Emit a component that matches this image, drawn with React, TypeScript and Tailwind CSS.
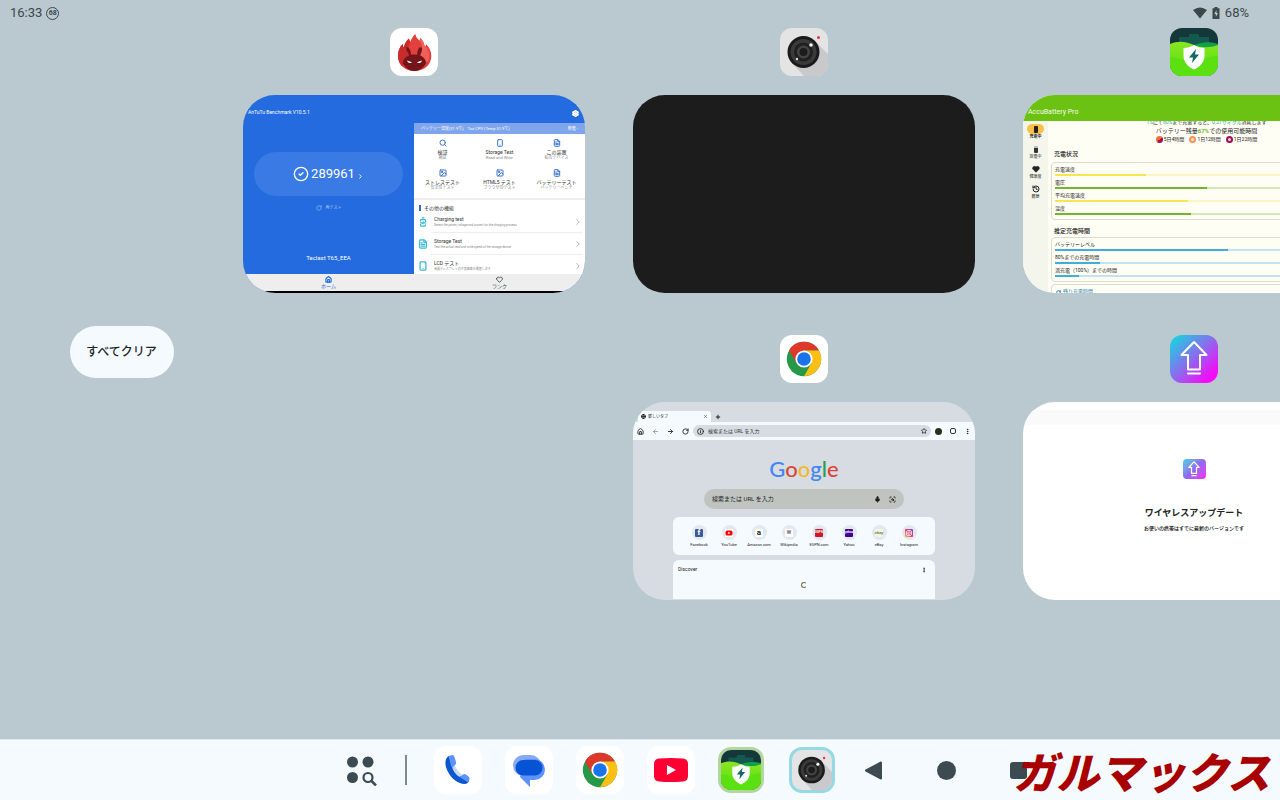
/**
 * Tablet recents screen
 * Overview of open tasks with the status bar and the taskbar
 */

import React from 'react'
import {
  ArrowLeft,
  ArrowRight,
  BatteryCharging,
  ChevronRight,
  CircleCheck,
  FileText,
  Globe,
  Heart,
  History,
  House,
  Image,
  Info,
  Mic,
  MoreVertical,
  Plus,
  RotateCw,
  ScanSearch,
  Search,
  Settings,
  Smartphone,
  Star,
  X,
} from 'lucide-react'

interface IconProps {
  className?: string
}

const AntutuIcon: React.FC<IconProps> = ({ className }) => (
  <svg className={className} viewBox="0 0 48 48" aria-hidden="true">
    <rect width="48" height="48" rx="12" fill="#fff" />
    <path
      d="M24.5 43C14.5 43 8 36.500 8 28c0-4.500 1.200-8.500 4.500-12 .2 1.600.6 2.600 1.300 3.500C14.500 16 16 13 19 10.500c.2 1.600.6 2.500 1.400 3.200C21.500 10.500 23 8 25.500 6c.2 2.800 1.500 4.600 4 6.600.6-.9.900-1.600 1-2.600 2.300 2.400 3.800 5.500 4.300 9 .8-.8 1.200-1.600 1.400-2.800C39.500 19.500 41.300 23.500 41.300 28 41.300 36.500 34.500 43 24.500 43z"
      fill="#e2403c"
    />
    <path
      d="M12.500 16C9.200 19.500 8 23.500 8 28c0 4 1.500 7.500 4 10l8-12c-2-5-1.500-9 .4-12.300-.8-.7-1.200-1.600-1.400-3.200-3 2.500-4.500 5.500-5.200 9-.7-.9-1.100-1.900-1.300-3.500z"
      fill="#c92a2a"
    />
    <path d="M29.500 12.600c3 5 3.500 9 1 15l7 7c3-6 2-12-2-16-.2 1-.4 1-.7.400-.5-3.500-2-6.600-4.300-9z" fill="#f0605a" />
    <path
      d="M12.800 35.500c0-4 3-6.800 6.400-8-.7-3-3.400-5-3-8 2.300-1.300 4.500 2.500 5 7.300 2-.4 4.200-.4 6 0 .3-4.500 1.300-8.300 4-7.500 2 1.500 0 5.200-1.200 8.300 3.500 1.300 6 4 6 7.900-2.500 4.500-7 7.500-11.700 7.500-4.800 0-9-3-11.500-7.500z"
      fill="#74141b"
    />
    <path d="M17 32.500l5 1.700c-.8 1.400-4 1.200-5-1.700zM32 32.500l-5 1.700c.8 1.400 4 1.200 5-1.700z" fill="#fff" />
  </svg>
)

const CameraIcon: React.FC<IconProps> = ({ className }) => (
  <svg className={className} viewBox="0 0 48 48" aria-hidden="true">
    <rect width="48" height="48" rx="12" fill="#e4e4e5" />
    <path d="M35 13l13 13v10a12 12 0 0 1-12 12H24L12 35z" fill="#c9c9cb" />
    <circle cx="23.500" cy="24" r="16" fill="#1b1b1b" />
    <circle cx="23.500" cy="24" r="13" fill="#3a3a3a" />
    <circle cx="23.500" cy="24" r="9.500" fill="#202020" />
    <circle cx="23.500" cy="24" r="6.500" fill="#444" />
    <circle cx="23.500" cy="24" r="4" fill="#1c1c1c" />
    <circle cx="31" cy="17" r="1.800" fill="#fff" />
    <circle cx="17" cy="31" r="1.200" fill="#ddd" />
    <circle cx="38.500" cy="9.500" r="1.500" fill="#ef2f4c" />
  </svg>
)

const AccuIcon: React.FC<IconProps> = ({ className }) => (
  <svg className={className} viewBox="0 0 48 48" aria-hidden="true">
    <defs>
      <linearGradient id="accu-grass" x1="0" y1="0" x2="0" y2="1">
        <stop offset="0" stopColor="#8be622" />
        <stop offset="1" stopColor="#4fdf0c" />
      </linearGradient>
      <clipPath id="accu-clip">
        <rect width="48" height="48" rx="12" />
      </clipPath>
    </defs>
    <g clipPath="url(#accu-clip)">
      <rect width="48" height="48" fill="#14373a" />
      <path d="M9 9h10V6h10v3h10v12H9z" fill="#15584f" />
      <path d="M22 18c8-4 18-5 26-2v8H22z" fill="#12a04e" />
      <path d="M0 16c9-4 17-2 24 1s16 3 24 0v31H0z" fill="url(#accu-grass)" />
      <path d="M0 29c8 0 12 4 22 4s18-6 26-5v20H0z" fill="#5be012" />
      <path d="M24 17c3 2 7 3 10.500 3v8c0 6-4.500 11-10.500 13.500C18 39 13.500 34 13.500 28v-8C17 20 21 19 24 17z" fill="#fafcfc" />
      <path d="M26 21l-7 8.500h4L22 35l7-8.500h-4z" fill="#126a5e" />
    </g>
  </svg>
)

const ChromeIcon: React.FC<IconProps> = ({ className }) => (
  <svg className={className} viewBox="-24 -24 48 48" aria-hidden="true">
    <rect x="-24" y="-24" width="48" height="48" rx="12" fill="#fff" />
    <circle r="17.200" fill="#279847" />
    <path d="M-14.900-8.600A17.200 17.200 0 0 1 14.900-8.600L0-8.600-7.450 4.300Z" fill="#e0372b" />
    <path d="M14.900-8.600A17.200 17.200 0 0 1 0 17.200L7.450 4.300 0-8.600Z" fill="#fcc015" />
    <circle r="8.600" fill="#fff" />
    <circle r="6.800" fill="#1a73e8" />
  </svg>
)

const UpdateIcon: React.FC<IconProps> = ({ className }) => (
  <svg className={className} viewBox="0 0 48 48" aria-hidden="true">
    <defs>
      <linearGradient id="update-bg" x1="0" y1="0" x2="1" y2="1">
        <stop offset="0.050" stopColor="#18d4e0" />
        <stop offset="0.500" stopColor="#8f68ee" />
        <stop offset="0.850" stopColor="#f40cf6" />
      </linearGradient>
    </defs>
    <rect width="48" height="48" rx="12" fill="url(#update-bg)" />
    <path
      d="M24 7L11.500 20H18v14.500h12V20h6.500zM18 38.500h12"
      fill="none"
      stroke="#fff"
      strokeWidth="2"
      strokeLinejoin="round"
      strokeLinecap="round"
    />
  </svg>
)

const PhoneIcon: React.FC<IconProps> = ({ className }) => (
  <svg className={className} viewBox="0 0 48 48" aria-hidden="true">
    <rect width="48" height="48" rx="12" fill="#fff" />
    <path d="M15 10C10.500 12 10.500 19 13.500 25c4 8 11 13 17 13 2.500 0 4-1.500 4.500-3l-9-5c-4-2-7-6-8-10z" fill="#0b57d0" />
    <path d="M18 20.500l2.500-1.500c1.500 4 4 7 7.500 9.500l-2.500 2.500c-4-2.500-6.500-6-7.500-10.500z" fill="#c5d8ff" />
    <path d="M15 10l3-1q2 0 2.500 2l1.500 5q.5 2-1 3l-3 3q-2.500-6-3-12z" fill="#5d92ff" />
    <path d="M25.500 31l3.500-2.500q1.500-1 3 0l3 2.500q1 1 .5 2.500l-1.500 3q-4-3-8.500-5.500z" fill="#5d92ff" />
  </svg>
)

const MessagesIcon: React.FC<IconProps> = ({ className }) => (
  <svg className={className} viewBox="0 0 48 48" aria-hidden="true">
    <rect width="48" height="48" rx="12" fill="#fff" />
    <rect x="8" y="9" width="28" height="21" rx="10.500" fill="#85aaf8" />
    <path d="M20 13h9.500a10.500 10.500 0 0 1 0 21H25v7L15 31z" fill="#5d92ff" />
    <rect x="10.500" y="14" width="27" height="15.500" rx="7.700" fill="#0654d4" />
  </svg>
)

const YouTubeIcon: React.FC<IconProps> = ({ className }) => (
  <svg className={className} viewBox="0 0 48 48" aria-hidden="true">
    <rect width="48" height="48" rx="12" fill="#fff" />
    <path d="M12 12.500q12-1 24 0 5 .5 5 5.500v12q0 5-5 5.500-12 1-24 0-5-.5-5-5.500V18q0-5 5-5.500z" fill="#ff0033" />
    <path d="M20 19v10l9-5z" fill="#fff" />
  </svg>
)

const tools = [
  { title: '検証', note: '検証', icon: Search },
  { title: 'Storage Test', note: 'Read and Write', icon: Smartphone },
  { title: 'この装置', note: '私のデバイス', icon: FileText },
  { title: 'ストレステスト', note: '安定性テスト', icon: Image },
  { title: 'HTML5 テスト', note: 'ブラウザのテスト', icon: Image },
  { title: 'バッテリーテスト', note: 'バッテリーベンチ', icon: FileText },
]

const extras = [
  { title: 'Charging test', note: 'Detect the power, voltage and current for the charging process', icon: BatteryCharging },
  { title: 'Storage Test', note: 'Test the actual read and write speed of the storage device', icon: FileText },
  { title: 'LCD テスト', note: '液晶ディスプレイの不良画素を検査します', icon: Smartphone },
]

const AntutuCard = () => (
  <div className="flex h-full flex-col bg-[#246be0]">
    <div className="flex min-h-0 flex-1 flex-col">
      <div className="flex h-7 shrink-0 items-center justify-between pt-2 pr-[6px] pl-[5px] text-[5px] text-white">
        <span>AnTuTu Benchmark V10.5.1</span>
        <Settings className="h-[7px] w-[7px]" strokeWidth={5} />
      </div>
      <div className="flex min-h-0 flex-1">
        <div className="flex w-1/2 flex-col px-[11px] pt-[29px] text-center text-white">
          <div className="flex h-11 shrink-0 items-center justify-center gap-[2px] rounded-[22px] bg-[#3a7ae4]">
            <CircleCheck className="h-4 w-4" strokeWidth={2} />
            <span className="text-[13px] leading-4">289961</span>
            <ChevronRight className="mt-1 h-[7px] w-[7px]" strokeWidth={3} />
          </div>
          <div className="mt-[9px] flex items-center justify-center gap-1 text-[4px] leading-[6px] text-[#b6cef6]">
            <RotateCw className="h-[6px] w-[6px]" />
            <span>再テスト</span>
          </div>
          <div className="mt-[43px] text-[6px] leading-[8px]">Teclast T65_EEA</div>
        </div>
        <div className="flex w-1/2 flex-col overflow-hidden bg-white text-[#333]">
          <div className="flex h-[11px] shrink-0 items-center justify-between bg-[#7fa5ec] pr-[7px] pl-[7px] text-[4px] text-white">
            <span>バッテリー温度(31.9℃)　Too CPU (Temp 51.9℃)</span>
            <span>節電 ›</span>
          </div>
          <div className="grid shrink-0 grid-cols-3 border-b-2 border-[#eeeeee] pb-1">
            {tools.map(({ title, note, icon: Icon }) => (
              <div key={title} className="flex h-[30px] flex-col items-center pt-[5px] whitespace-nowrap">
                <Icon className="mb-[2px] h-2 w-2 shrink-0 text-[#3a74cf]" strokeWidth={3} />
                <span className="text-[5px] leading-[6px]">{title}</span>
                <span className="text-[4px] leading-[5px] text-[#888]">{note}</span>
              </div>
            ))}
          </div>
          <div className="flex h-[11px] shrink-0 items-center gap-[3px] pt-[5px] pl-[5px] text-[5px] leading-[6px]">
            <span className="h-[6px] w-[2px] bg-[#246be0]"></span>
            その他の機能
          </div>
          {extras.map(({ title, note, icon: Icon }, index) => (
            <div key={title} className="flex h-[22px] shrink-0 items-center pr-[2px] pl-1 whitespace-nowrap">
              <Icon className={`h-[10px] w-[10px] text-[#37b8d6] ${index === 0 ? '-rotate-90' : ''}`} strokeWidth={3} />
              <div className="ml-[3px] flex h-full flex-1 items-center justify-between border-b border-[#eeeeee] pl-[3px]">
                <div>
                  <div className="text-[5px] leading-[6px]">{title}</div>
                  <div className="text-[3px] leading-[6px] text-[#888]">{note}</div>
                </div>
                <ChevronRight className="h-[10px] w-[10px] text-[#aaa]" />
              </div>
            </div>
          ))}
        </div>
      </div>
    </div>
    <div className="flex h-[19px] shrink-0 border-b-2 border-black bg-[#eeeeee] text-[5px] leading-[6px]">
      <div className="flex w-1/2 flex-col items-center pt-[2px] text-[#246be0]">
        <House className="h-[7px] w-[7px]" strokeWidth={4} />
        ホーム
      </div>
      <div className="flex w-1/2 flex-col items-center pt-[2px] text-[#444]">
        <Heart className="h-[7px] w-[7px]" strokeWidth={3} />
        ランク
      </div>
    </div>
  </div>
)

const chargeStats = [
  { label: '充電速度', value: 30, bar: 'bg-[#f9e54f]', track: 'bg-[#fdf5c4]' },
  { label: '電圧', value: 50, bar: 'bg-[#71b72b]', track: 'bg-[#d3e8b9]' },
  { label: '平均充電速度', value: 44, bar: 'bg-[#f9e54f]', track: 'bg-[#fdf5c4]' },
  { label: '温度', value: 45, bar: 'bg-[#71b72b]', track: 'bg-[#d3e8b9]' },
]

const timeStats = [
  { label: 'バッテリーレベル', value: 57, bar: 'bg-[#3faedb]', track: 'bg-[#c3e3ef]' },
  { label: '80%までの充電時間', value: 15, bar: 'bg-[#3faedb]', track: 'bg-[#c3e3ef]' },
  { label: '満充電（100%）までの時間', value: 8, bar: 'bg-[#3faedb]', track: 'bg-[#c3e3ef]' },
]

const StatBox: React.FC<{ stats: typeof chargeStats }> = ({ stats }) => (
  <div className="flex flex-col gap-[3px] rounded-[4px] border border-[#d9dcd0] px-[3px] pt-[3px] pb-1">
    {stats.map((stat) => (
      <div key={stat.label} className="text-[5px] leading-[6px]">
        <div className="mb-[2px]">{stat.label}</div>
        <div className={`h-[2px] ${stat.track}`}>
          <div className={`h-[2px] ${stat.bar}`} style={{ width: `${stat.value}%` }}></div>
        </div>
      </div>
    ))}
  </div>
)

const AccuCard = () => (
  <div className="flex h-full flex-col bg-[#fffef5] text-[#222]">
    <div className="flex h-[26px] shrink-0 items-center bg-[#6cc212] pt-2 pl-[5px] text-[7px] text-[#f4fbe8]">AccuBattery Pro</div>
    <div className="flex min-h-0 flex-1">
      <div className="flex w-[25px] shrink-0 flex-col items-center gap-[5px] bg-[#f4f6ec] pt-[3px] text-[4px] leading-[5px]">
        <div className="flex flex-col items-center">
          <span className="flex h-[10px] w-[17px] items-center justify-center rounded-full bg-[#fbc147]">
            <span className="h-[7px] w-1 rounded-[1px] bg-[#222]"></span>
          </span>
          <b>充電中</b>
        </div>
        <div className="flex flex-col items-center">
          <span className="flex h-[10px] items-center">
            <span className="h-[7px] w-1 rounded-[1px] border-t-2 border-[#bbb] bg-[#333]"></span>
          </span>
          放電中
        </div>
        <div className="flex flex-col items-center">
          <Heart className="my-[1px] h-2 w-2" fill="currentColor" />
          健康度
        </div>
        <div className="flex flex-col items-center">
          <History className="my-[1px] h-2 w-2" strokeWidth={3} />
          履歴
        </div>
      </div>
      <div className="min-w-0 flex-1 px-[3px]">
        <div className="flex h-1 items-end justify-center overflow-hidden text-[5px] leading-[6px] whitespace-nowrap">
          <span className="text-[#27a5a5]">1%</span>にて<span className="text-[#27a5a5]">80%</span>まで充電すると、<span className="text-[#27a5a5]">0.21サイクル</span>消耗します
        </div>
        <div className="mt-[1px] text-center text-[6px] leading-[10px]">
          バッテリー残量<b className="text-[#71b72b]">67%</b>での使用可能時間
        </div>
        <div className="flex items-center justify-center gap-[5px] text-[5px] leading-[7px]">
          <span className="flex items-center gap-[1px]"><i className="h-[7px] w-[7px] rounded-full bg-linear-135 from-[#f36a35] from-50% to-[#a30f52] to-50%"></i>5日4時間</span>
          <span className="flex items-center gap-[1px]"><i className="h-[7px] w-[7px] rounded-full border-2 border-[#f6935b] bg-[#fde0c8]"></i>1日12時間</span>
          <span className="flex items-center gap-[1px]"><i className="h-[7px] w-[7px] rounded-full border-2 border-[#a30f52] bg-[#f7dbe6]"></i>1日22時間</span>
        </div>
        <div className="pt-[7px] pb-1 pl-[3px] text-[6px] leading-[8px] font-medium">充電状況</div>
        <StatBox stats={chargeStats} />
        <div className="pt-[7px] pb-[2px] pl-[3px] text-[6px] leading-[8px] font-medium">推定充電時間</div>
        <StatBox stats={timeStats} />
        <div className="mt-[2px] flex h-4 items-center gap-[2px] rounded-[4px] border border-[#d9dcd0] pl-1 text-[5px] text-[#1e7fb0]">
          <RotateCw className="h-[5px] w-[5px]" strokeWidth={4} />
          残り充電時間
        </div>
      </div>
    </div>
  </div>
)

const shortcuts = [
  { name: 'Facebook', mark: 'f', tile: 'bg-[#3b5998] text-white text-[8px]' },
  { name: 'YouTube', mark: '', tile: 'bg-white' },
  { name: 'Amazon.com', mark: 'a', tile: 'bg-white text-[#222] text-[8px]' },
  { name: 'Wikipedia', mark: 'W', tile: 'bg-white text-[#666] text-[5px]' },
  { name: 'ESPN.com', mark: 'ESPN', tile: 'bg-[#d0142c] text-white text-[3px]' },
  { name: 'Yahoo', mark: 'yahoo', tile: 'bg-[#410093] text-white text-[3px]' },
  { name: 'eBay', mark: 'ebay', tile: 'bg-[#f3f3ee] text-[#7c8a3c] text-[4px]' },
  { name: 'Instagram', mark: '', tile: 'bg-linear-to-tr from-[#fdb74a] via-[#e1306c] to-[#7b3fd0]' },
]

const ShortcutMark: React.FC<{ name: string; mark: string }> = ({ name, mark }) => {
  if (name === 'YouTube') {
    return (
      <svg className="h-2 w-2" viewBox="0 0 16 16" aria-hidden="true">
        <rect x="1" y="3" width="14" height="10" rx="3" fill="#f00" />
        <path d="M6.500 5.500v5l4-2.500z" fill="#fff" />
      </svg>
    )
  }
  if (name === 'Instagram') {
    return (
      <svg className="h-2 w-2" viewBox="0 0 16 16" fill="none" stroke="#fff" strokeWidth="1.500" aria-hidden="true">
        <rect x="3" y="3" width="10" height="10" rx="3" />
        <circle cx="8" cy="8" r="2.500" />
      </svg>
    )
  }
  return <>{mark}</>
}

const ChromeCard = () => (
  <div className="flex h-full flex-col bg-[#d6dce2] text-[#222]">
    <div className="flex h-5 shrink-0 items-center pt-[9px] pl-[5px]">
      <div className="flex h-full w-[73px] items-center gap-[2px] rounded-t-[3px] bg-[#f5fafe] px-[3px] text-[4px]">
        <Globe className="h-[5px] w-[5px]" strokeWidth={4} />
        <span className="flex-1">新しいタブ</span>
        <X className="h-[5px] w-[5px]" />
      </div>
      <Plus className="ml-1 h-[6px] w-[6px]" strokeWidth={4} />
    </div>
    <div className="flex h-[18px] shrink-0 items-center gap-2 bg-[#f5fafe] px-1">
      <House className="h-[7px] w-[7px]" strokeWidth={3} />
      <ArrowLeft className="h-[7px] w-[7px] text-[#999]" strokeWidth={3} />
      <ArrowRight className="h-[7px] w-[7px]" strokeWidth={3} />
      <RotateCw className="h-[7px] w-[7px]" strokeWidth={3} />
      <label className="-ml-1 flex h-3 flex-1 items-center gap-1 rounded-full bg-[#d6dce2] px-1">
        <Info className="h-[7px] w-[7px]" strokeWidth={3} />
        <input className="min-w-0 flex-1 text-[5px] leading-[8px] outline-none placeholder:text-[#333]" placeholder="検索または URL を入力" aria-label="アドレスバー" />
        <Star className="h-[6px] w-[6px]" strokeWidth={3} />
      </label>
      <span className="-ml-1 h-[7px] w-[7px] rounded-full bg-[#27301f]"></span>
      <span className="h-[6px] w-[6px] rounded-[2px] border border-[#333]"></span>
      <MoreVertical className="h-[7px] w-[7px]" strokeWidth={3} />
    </div>
    <div className="flex min-h-0 flex-1 flex-col items-center pt-[15px]">
      <div className="font-[Lato,sans-serif] text-[22px] leading-[28px] font-medium">
        <span className="text-[#4285f4]">G</span>
        <span className="text-[#db4437]">o</span>
        <span className="text-[#f4b928]">o</span>
        <span className="text-[#4285f4]">g</span>
        <span className="text-[#2f9c53]">l</span>
        <span className="text-[#db4437]">e</span>
      </div>
      <label className="mt-[6px] flex h-5 w-[200px] shrink-0 items-center gap-2 rounded-full bg-[#bfc4c1] px-2">
        <input className="min-w-0 flex-1 text-[6px] leading-[10px] outline-none placeholder:text-[#222]" placeholder="検索または URL を入力" aria-label="検索" />
        <Mic className="h-[7px] w-[7px]" fill="currentColor" strokeWidth={2} />
        <ScanSearch className="h-[7px] w-[7px]" strokeWidth={3} />
      </label>
      <div className="mt-2 flex h-[38px] w-[262px] shrink-0 justify-center rounded-[6px] bg-[#f5fafe] pt-2">
        {shortcuts.map((item) => (
          <a key={item.name} href="#" className="flex w-[30px] flex-col items-center gap-[2px] text-[4px] leading-[6px]">
            <span className="flex h-[15px] w-[15px] items-center justify-center rounded-full bg-[#e2e8f0]">
              <span className={`flex h-2 w-2 items-center justify-center rounded-[1px] leading-none font-bold ${item.tile}`}>
                <ShortcutMark name={item.name} mark={item.mark} />
              </span>
            </span>
            {item.name}
          </a>
        ))}
      </div>
      <div className="mt-[5px] flex h-[39px] w-[262px] shrink-0 flex-col rounded-t-[6px] bg-[#f5fafe] px-[5px] pt-[6px] text-[5px] leading-[7px]">
        <div className="flex items-center justify-between pr-[3px]">
          <span>Discover</span>
          <MoreVertical className="h-[6px] w-[6px]" strokeWidth={3} />
        </div>
        <span className="mt-[9px] h-[6px] w-[6px] self-center rounded-full border border-[#73754d] border-r-transparent"></span>
      </div>
    </div>
  </div>
)

const UpdateCard = () => (
  <div className="h-full bg-white pt-2 text-center text-[#222]">
    <div className="h-[15px] bg-[#fafafa]"></div>
    <div className="mx-auto mt-[34px] flex h-5 w-[23px] items-center justify-center rounded-[4px] bg-linear-135 from-[#18d4e0] via-[#8f68ee] to-[#f40cf6]">
      <svg className="h-5 w-5" viewBox="0 0 48 48" fill="none" stroke="#fff" strokeWidth="3" strokeLinejoin="round" aria-hidden="true">
        <path d="M24 7L11.500 20H18v14.500h12V20h6.500zM18 40h12" />
      </svg>
    </div>
    <div className="mt-[27px] text-[9px] leading-[14px] font-bold">ワイヤレスアップデート</div>
    <div className="mt-1 text-[5px] leading-[8px] font-medium text-black">お使いの携帯はすでに最新のバージョンです</div>
  </div>
)

interface TaskProps {
  name: string
  icon: React.ReactNode
  children: React.ReactNode
}

const Task: React.FC<TaskProps> = ({ name, icon, children }) => (
  <section aria-label={name} className="flex flex-col items-center gap-[19px]">
    {icon}
    <div className="h-[198px] w-full overflow-hidden rounded-[32px]">{children}</div>
  </section>
)

const StatusBar = () => (
  <header className="flex h-6 shrink-0 items-center justify-between pt-[2px] pr-[31px] pl-[10px] text-[13px] leading-4 text-[#3c474c]">
    <div className="flex items-center gap-1">
      <span>16:33</span>
      <span className="flex h-[13px] w-[13px] items-center justify-center rounded-full border border-[#3c474c] text-[7px] leading-none font-bold">68</span>
    </div>
    <div className="flex items-center gap-[5px]">
      <svg className="h-[14px] w-[14px]" viewBox="0 0 14 14" fill="currentColor" aria-hidden="true">
        <path d="M0 4Q7-1 14 4L7 12.500z" />
      </svg>
      <svg className="h-3 w-2" viewBox="0 0 8 12" aria-hidden="true">
        <path d="M2.500 0h3v1.300H7.500V12h-7V1.300h2z" fill="currentColor" />
        <path d="M4.500 3L2.300 7h1.500v3L6 6H4.500z" fill="#bac8d0" />
      </svg>
      <span>68%</span>
    </div>
  </header>
)

const Taskbar = () => (
  <footer className="relative flex h-[61px] shrink-0 items-center border-t border-[#dfe8ee] bg-[#f5faff] pl-[27%] text-[#3c4a51]">
    <button type="button" aria-label="アプリ一覧" className="shrink-0">
      <svg className="h-[31px] w-[31px]" viewBox="0 0 31 31" fill="currentColor" aria-hidden="true">
        <circle cx="6.500" cy="7" r="5.500" />
        <circle cx="22" cy="7" r="5.500" />
        <circle cx="6.500" cy="22.500" r="5.500" />
        <circle cx="22" cy="22.500" r="4.500" fill="none" stroke="currentColor" strokeWidth="2.200" />
        <path d="M25.500 26l4.500 4.500" stroke="currentColor" strokeWidth="2.500" />
      </svg>
    </button>
    <span className="mr-[27px] ml-7 h-[30px] w-[2px] shrink-0 bg-[#7d8990]"></span>
    <div className="flex shrink-0 items-center gap-[23px]">
      <button type="button" aria-label="電話"><PhoneIcon className="h-12 w-12" /></button>
      <button type="button" aria-label="メッセージ"><MessagesIcon className="h-12 w-12" /></button>
      <button type="button" aria-label="Chrome"><ChromeIcon className="h-12 w-12" /></button>
      <button type="button" aria-label="YouTube"><YouTubeIcon className="h-12 w-12" /></button>
      <button type="button" aria-label="AccuBattery" className="rounded-[13px] border-[3px] border-[#b4d5a0] bg-[#b4d5a0]"><AccuIcon className="h-10 w-10" /></button>
      <button type="button" aria-label="カメラ" className="ml-[2px] rounded-[13px] border-[3px] border-[#96d9e5] bg-[#96d9e5]"><CameraIcon className="h-10 w-10" /></button>
    </div>
    <div className="ml-[29px] flex shrink-0 items-center gap-[54px]">
      <button type="button" aria-label="戻る">
        <svg className="h-[19px] w-[19px]" viewBox="0 0 19 19" fill="currentColor" stroke="currentColor" strokeWidth="2" strokeLinejoin="round" aria-hidden="true">
          <path d="M17 1.500v16L2 9.500z" />
        </svg>
      </button>
      <button type="button" aria-label="ホーム" className="h-[19px] w-[19px] rounded-full bg-[#3c4a51]"></button>
      <button type="button" aria-label="最近" className="h-[17px] w-[17px] rounded-[3px] bg-[#3c4a51]"></button>
    </div>
    <span className="absolute right-[10px] bottom-1 text-[43px] leading-[44px] font-black whitespace-nowrap text-[#a80000] italic">ガルマックス</span>
  </footer>
)

export default function App() {
  return (
    <div className="flex min-h-screen flex-col overflow-hidden bg-[#bac8d0] font-[Roboto,'Noto_Sans_CJK_JP',sans-serif]" lang="ja">
      <StatusBar />
      <main className="flex min-h-0 flex-1 overflow-hidden">
        <aside className="flex w-[243px] shrink-0 items-center justify-center pb-[60px]">
          <button type="button" className="h-[52px] w-[104px] rounded-full bg-[#f5faff] text-[12px] font-medium text-[#1c2428]">すべてクリア</button>
        </aside>
        <div className="flex gap-12 pt-1">
          <div className="w-[342px] shrink-0">
            <Task name="AnTuTu Benchmark" icon={<AntutuIcon className="h-12 w-12" />}>
              <AntutuCard />
            </Task>
          </div>
          <div className="flex w-[342px] shrink-0 flex-col gap-[42px]">
            <Task name="カメラ" icon={<CameraIcon className="h-12 w-12" />}>
              <div className="h-full bg-[#1c1c1c]"></div>
            </Task>
            <Task name="Chrome" icon={<ChromeIcon className="h-12 w-12" />}>
              <ChromeCard />
            </Task>
          </div>
          <div className="flex w-[342px] shrink-0 flex-col gap-[42px]">
            <Task name="AccuBattery" icon={<AccuIcon className="h-12 w-12" />}>
              <AccuCard />
            </Task>
            <Task name="ワイヤレスアップデート" icon={<UpdateIcon className="h-12 w-12" />}>
              <UpdateCard />
            </Task>
          </div>
        </div>
      </main>
      <Taskbar />
    </div>
  )
}
